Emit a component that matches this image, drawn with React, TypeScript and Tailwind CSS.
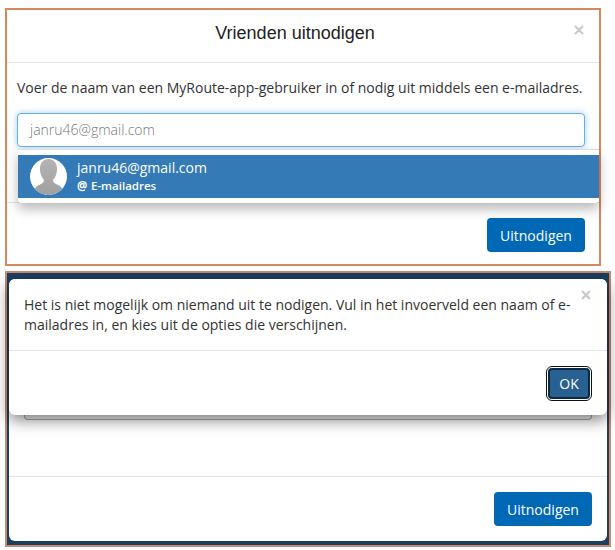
import React from "react";

const sans = "font-['Open_Sans','Liberation_Sans',sans-serif]";

function CloseX({ className }: { className: string }) {
  return (
    <svg viewBox="0 0 10 10" className={`absolute h-[10px] w-[10px] text-[#c8c8c8] ${className}`}>
      <path d="M1 1 L9 9 M9 1 L1 9" stroke="currentColor" strokeWidth="2.2" />
    </svg>
  );
}

function Avatar() {
  return (
    <svg viewBox="0 0 37 37" className="h-[37px] w-[37px] shrink-0">
      <defs>
        <linearGradient id="person" x1="0" y1="0" x2="0" y2="1">
          <stop offset="0" stopColor="#b4b4b4" />
          <stop offset="1" stopColor="#a0a0a0" />
        </linearGradient>
        <clipPath id="round">
          <circle cx="18.5" cy="18.5" r="18.5" />
        </clipPath>
      </defs>
      <circle cx="18.5" cy="18.5" r="18.5" fill="#fff" />
      <g clipPath="url(#round)" fill="url(#person)">
        <path d="M18.5 1 C24.5 1 27.5 6 27 12 C26.7 16 25.5 19 23 22 C23 24.5 25 25.5 28 27 C31 28.5 33 30 34 37 L3 37 C4 30 6 28.5 9 27 C12 25.5 14 24.5 14 22 C11.5 19 10.3 16 10 12 C9.5 6 12.5 1 18.5 1 Z" />
      </g>
    </svg>
  );
}

function PrimaryButton() {
  return (
    <button className="h-[34px] w-[98px] rounded-[4px] bg-[#0068b4] text-[14px] text-white">
      Uitnodigen
    </button>
  );
}

function InviteDialog() {
  return (
    <div className="relative ml-[5px] mt-[8px] h-[258px] w-[596px] border-2 border-[#d6875c] bg-white">
      <div className="relative flex h-[53px] items-center justify-center border-b border-[#e5e5e5] pb-[6px] pr-[16px]">
        <h2 className="text-[18px] leading-none text-[#222] font-['Liberation_Sans',sans-serif]">Vrienden uitnodigen</h2>
        <CloseX className="right-[15px] top-[15px]" />
      </div>
      <div className="h-[140px] border-b border-[#e5e5e5] px-[10px] pt-[15px]">
        <p className="text-[14px] leading-[20px] text-[#333]">
          Voer de naam van een MyRoute-app-gebruiker in of nodig uit middels een e-mailadres.
        </p>
        <div className="mt-[15px] flex h-[34px] w-[568px] items-center rounded-[4px] border border-[#66afe9] bg-white px-[12px] pb-[2px] text-[14px] font-light text-[#777] shadow-[0_0_6px_rgba(102,175,233,0.6)]">
          janru46@gmail.com
        </div>
      </div>
      <div className="flex justify-end px-[14px] pt-[15px]">
        <PrimaryButton />
      </div>
      <div className="absolute left-[11px] right-0 top-[139px] h-[54px] rounded-b-[4px] border-t border-[#ddd] bg-white pt-[5px] shadow-[0_6px_12px_rgba(0,0,0,0.28)]">
        <div className="flex h-[43px] items-center gap-[10px] bg-[#337ab7] pl-[12px] text-white">
          <Avatar />
          <div>
            <div className="text-[14px] leading-[18px]">janru46@gmail.com</div>
            <div className="flex text-[11.5px] font-semibold leading-[18px]">
              <span className="w-[14px] font-bold">@</span>
              <span>E-mailadres</span>
            </div>
          </div>
        </div>
      </div>
    </div>
  );
}

function AlertDialog() {
  return (
    <div className="relative ml-[5px] mt-[5px] h-[276px] w-[606px] border-2 border-[#c98a68] bg-[#1b3f63] px-[2px] pt-[6px]">
      <div className="flex h-[262px] flex-col rounded-[6px] bg-white">
        <div className="h-[198px] border-b border-[#e5e5e5]" />
        <div className="flex justify-end pr-[15px] pt-[15px]">
          <PrimaryButton />
        </div>
      </div>
      <div className="absolute left-[17px] top-[134px] h-[13px] w-[568px] rounded-b-[4px] border border-t-0 border-[#aaa] bg-[#f3f3f3]" />
      <div className="absolute left-[2px] right-[2px] top-[6px] h-[136px] rounded-[6px] bg-white shadow-[0_5px_15px_rgba(0,0,0,0.5)]">
        <CloseX className="right-[16px] top-[11px]" />
        <div className="h-[72px] border-b border-[#e5e5e5] pl-[15px] pr-[30px] pt-[16px]">
          <p className="text-[14px] leading-[20px] text-[#333]">
            Het is niet mogelijk om niemand uit te nodigen. Vul in het invoerveld een naam of e-mailadres in, en kies uit de opties die verschijnen.
          </p>
        </div>
        <div className="flex justify-end pr-[15px] pt-[15px]">
          <div className="rounded-[6px] border border-[#111] bg-white p-px">
            <button className="block h-[31px] w-[42px] rounded-[4px] border-2 border-[#0d2a45] bg-[#286090] text-[14px] text-white">
              OK
            </button>
          </div>
        </div>
      </div>
    </div>
  );
}

export default function App() {
  return (
    <div className={`h-[550px] w-[615px] overflow-hidden bg-white ${sans}`}>
      <InviteDialog />
      <AlertDialog />
    </div>
  );
}
